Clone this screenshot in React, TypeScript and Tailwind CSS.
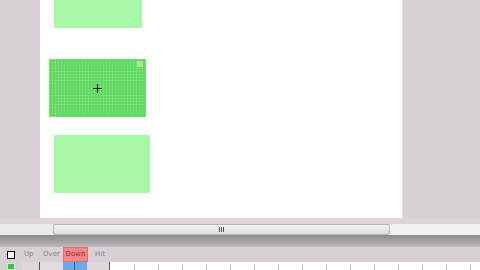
import React from "react";

const ticks = [134, 158, 182, 206, 230, 254, 278, 302, 326, 350, 374, 398, 422, 446, 470];

export default function App() {
  return (
    <div className="w-[480px] h-[270px] overflow-hidden flex flex-col bg-[#d7d1d7]" style={{ fontFamily: '"DejaVu Sans", sans-serif' }}>
      {/* stage area */}
      <div className="h-[218px] flex shrink-0">
        <div className="w-[40px] shrink-0 bg-[#d7d1d7]" />
        <div className="w-[363px] shrink-0 bg-white relative border-r border-[#e8e0e8]">
          <div className="absolute left-[14px] top-0 w-[88px] h-[28px] bg-[#a8f8a8]" />
          <div
            className="absolute left-[9px] top-[59px] w-[97px] h-[58px] bg-[#5cd85c]"
            style={{
              backgroundImage:
                "repeating-linear-gradient(0deg, rgba(255,255,255,0.12) 0 1px, transparent 1px 3px), repeating-linear-gradient(90deg, rgba(255,255,255,0.12) 0 1px, transparent 1px 3px)",
            }}
          >
            <div className="absolute right-[3px] top-[2px] w-[6px] h-[6px] bg-[#9ee89e]" />
            <svg className="absolute left-[44px] top-[25px]" width="9" height="9" viewBox="0 0 9 9">
              <path d="M4.5 0V9M0 4.5H9" stroke="#111" strokeWidth="1" />
            </svg>
          </div>
          <div className="absolute left-[14px] top-[135px] w-[96px] h-[58px] bg-[#a8f8a8]" />
        </div>
        <div className="flex-1 bg-[#d7d1d7]" />
      </div>
      {/* gap */}
      <div className="h-[6px] shrink-0 bg-[#dcd6dc]" />
      {/* scrollbar */}
      <div className="h-[11px] shrink-0 flex bg-[#ebe6eb]">
        <div className="w-[53px] shrink-0 bg-[#ece8ec]" />
        <div className="w-[337px] shrink-0 bg-gradient-to-b from-[#f4f2f4] to-[#dedade] border border-[#b8b4b8] rounded-[2px] flex items-center justify-center gap-[1px]">
          <div className="w-px h-[5px] bg-[#555]" />
          <div className="w-px h-[5px] bg-[#555]" />
          <div className="w-px h-[5px] bg-[#555]" />
        </div>
        <div className="flex-1 bg-[#f4f0f4]" />
      </div>
      {/* dark band */}
      <div className="h-[12px] shrink-0 bg-gradient-to-b from-[#8c8a8c] via-[#a4a2a4] to-[#bdb9bd]" />
      {/* timeline header */}
      <div className="h-[15px] shrink-0 flex items-center bg-[#d7d1d7] text-[7px] text-[#8a868a]">
        <div className="w-[22px] flex items-center justify-center">
          <div className="w-[8px] h-[8px] border-[1.5px] border-black bg-white" />
        </div>
        <div className="w-[20px] pl-[2px]">Up</div>
        <div className="w-[21px] pl-[1px]">Over</div>
        <div className="w-[25px] h-[15px] bg-[#f28888] text-[#b02020] flex items-center justify-center border border-[#e07070]">Down</div>
        <div className="pl-[7px]">Hit</div>
      </div>
      {/* timeline row */}
      <div className="h-[8px] shrink-0 flex bg-[#d7d1d7] relative">
        <div className="w-[22px] flex items-start justify-center">
          <div className="w-[8px] h-[7px] mt-[1px] bg-[#3ec03e] border border-[#c8f0c8]" />
        </div>
        <div className="w-[18px] bg-[#dcd8dc] border-r border-[#555]" />
        <div className="w-[23px] bg-[#e0dce0]" />
        <div className="w-[12px] bg-[#6aa8e8] border-r border-[#2c5c9c]" />
        <div className="w-[12px] bg-[#6aa8e8]" />
        <div className="w-[23px] bg-[#dcd8dc] border-r border-[#555]" />
        <div className="flex-1 bg-white" />
        {ticks.map((x) => (
          <div key={x} className="absolute top-[3px] w-px h-[5px] bg-[#bbb]" style={{ left: x }} />
        ))}
      </div>
    </div>
  );
}
